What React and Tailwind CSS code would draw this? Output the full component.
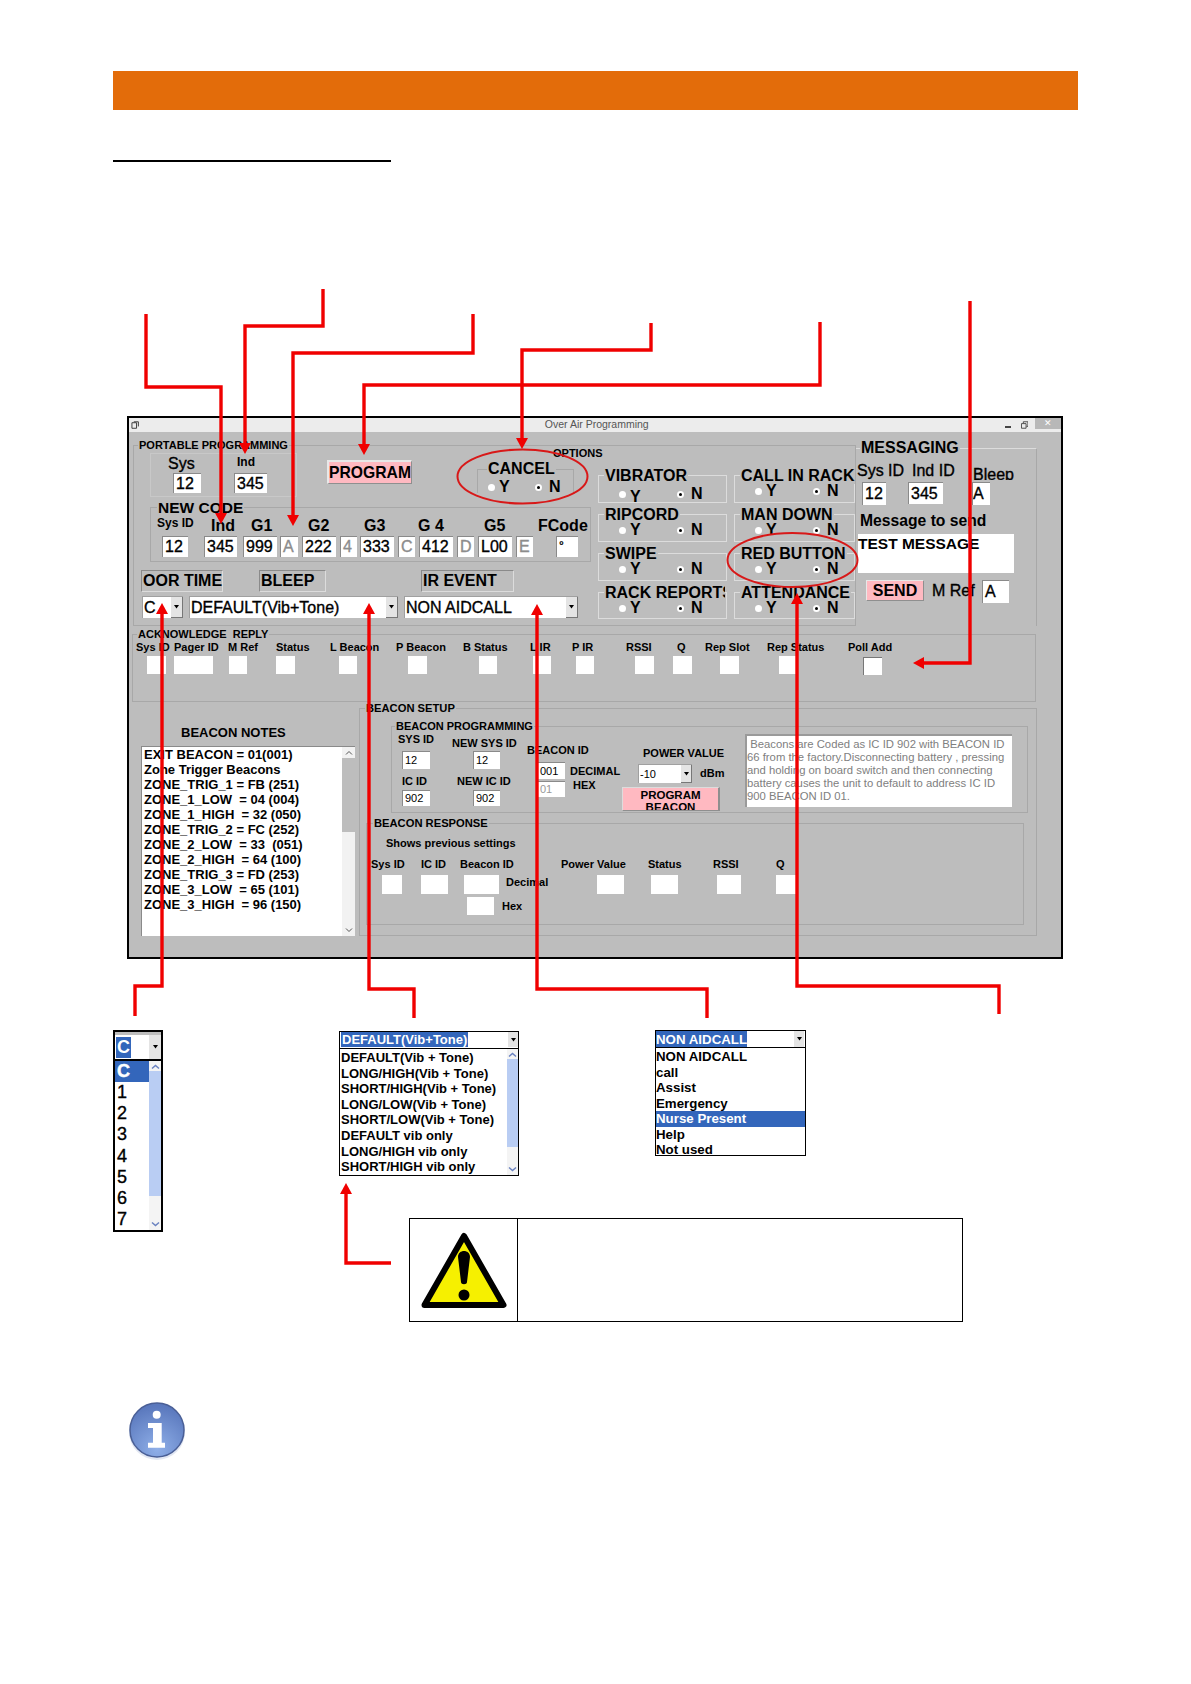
import React from 'react';

// --- SHARED BITS ---

const BG = 'bg-[#bdbdbd]';
const SEMI = 'font-normal [-webkit-text-stroke:0.35px_#000]';

const Legend = ({ className = '', children }) => (
  <span className={`absolute ${BG} whitespace-nowrap px-px leading-none font-bold text-black ${className}`}>{children}</span>
);

const Field = ({ className = '', children }) => (
  <div className={`bg-white border-t border-l border-[#8a8a8a] shrink-0 overflow-hidden flex items-center pl-[2px] whitespace-nowrap ${className}`}>{children}</div>
);

const Lbl = ({ className = '', children }) => (
  <span className={`shrink-0 whitespace-nowrap block ${className}`}>{children}</span>
);

const Tri = () => (
  <svg width="7" height="4" viewBox="0 0 7 4"><path d="M1 0h5L3.500 3.500z" fill="#000" /></svg>
);

const Combo = ({ className = '', children, btn = 'w-[12px]' }) => (
  <div className={`bg-white border-t border-l border-[#a0a0a0] flex shrink-0 overflow-hidden ${className}`}>
    <div className="flex-1 pl-[1px] flex items-center whitespace-nowrap overflow-hidden">{children}</div>
    <div className={`${btn} bg-[#e4e4e4] border-r border-b border-[#777] flex items-center justify-center`}><Tri /></div>
  </div>
);

const Radio = ({ on }) => (
  <span className="w-[7px] h-[7px] rounded-full bg-white flex items-center justify-center shrink-0">
    {on && <span className="w-[3px] h-[3px] rounded-full bg-black" />}
  </span>
);

const YesNo = ({ className = '', yClass = 'w-[47px]' }) => (
  <div className={`flex items-center text-[16px] font-bold leading-[16px] ${className}`}>
    <Radio />
    <span className={`ml-[4px] ${yClass}`}>Y</span>
    <Radio on />
    <span className="ml-[7px]">N</span>
  </div>
);

const Option = ({ title, className = '', yClass = 'w-[47px]', row = 'ml-[20px] mt-[7px]' }) => (
  <div className={`relative border border-[#dcdcdc] ${className}`}>
    <Legend className="-top-[8px] left-[5px] text-[16px] h-[16px] max-w-[121px] overflow-hidden">{title}</Legend>
    <YesNo className={row} yClass={yClass} />
  </div>
);

// --- ARROWS AND RINGS DRAWN OVER THE FORM ---

const Arrow = ({ pts }) => {
  const [tx, ty] = pts[pts.length - 1];
  const [px, py] = pts[pts.length - 2];
  const dx = Math.sign(tx - px);
  const dy = Math.sign(ty - py);
  const head = `${tx},${ty} ${tx - dx * 11 - dy * 6},${ty - dy * 11 - dx * 6} ${tx - dx * 11 + dy * 6},${ty - dy * 11 + dx * 6}`;
  const line = pts.slice(0, -1).map((p) => p.join(',')).join(' ') + ` ${tx - dx * 8},${ty - dy * 8}`;
  return (
    <g>
      <polyline points={line} fill="none" stroke="#f00000" strokeWidth="3.400" strokeLinejoin="miter" />
      <polygon points={head} fill="#f00000" />
    </g>
  );
};

const Overlay = () => (
  <svg className="absolute top-0 left-0 pointer-events-none" width="1191" height="1684" viewBox="0 0 1191 1684">
    <Arrow pts={[[146, 314], [146, 387], [221, 387], [221, 524]]} />
    <Arrow pts={[[323, 289], [323, 326], [245, 326], [245, 454]]} />
    <Arrow pts={[[473, 314], [473, 353], [293, 353], [293, 526]]} />
    <Arrow pts={[[820, 322], [820, 385], [364, 385], [364, 455]]} />
    <Arrow pts={[[651, 323], [651, 350], [522, 350], [522, 449]]} />
    <Arrow pts={[[970, 301], [970, 663], [913, 663]]} />
    <Arrow pts={[[135, 1016], [135, 986], [162, 986], [162, 603]]} />
    <Arrow pts={[[414, 1018], [414, 989], [369, 989], [369, 603]]} />
    <Arrow pts={[[707, 1018], [707, 989], [537, 989], [537, 604]]} />
    <Arrow pts={[[999, 1014], [999, 986], [797, 986], [797, 593]]} />
    <Arrow pts={[[391, 1263], [346, 1263], [346, 1183]]} />
    <ellipse cx="522.500" cy="476.500" rx="65" ry="27" fill="none" stroke="#d81818" strokeWidth="2" />
    <ellipse cx="792.500" cy="560" rx="65" ry="27" fill="none" stroke="#d81818" strokeWidth="2" />
  </svg>
);

// --- WINDOW SECTIONS ---

const TitleBar = () => (
  <div className="h-[14px] bg-[#ececec] flex items-center relative text-[10.500px] text-[#555]">
    <svg className="ml-[2px]" width="9" height="9" viewBox="0 0 9 9"><path d="M1 1.500h5v6h-5zM3 .500h5v5" fill="none" stroke="#333" /></svg>
    <span className="ml-[402px] w-[120px] text-center whitespace-nowrap">Over Air Programming</span>
    <span className="ml-[353px] w-[6px] h-[2px] bg-[#444] mt-[3px]" />
    <svg className="ml-[10px]" width="8" height="8" viewBox="0 0 8 8"><path d="M.500 2.500h5v5h-5zM2.500 2V.500h5v5H6" fill="none" stroke="#444" /></svg>
    <div className="ml-[7px] w-[28px] h-[11px] -mt-[3px] bg-[#b8b8b8] flex items-center justify-center text-white text-[9px]">✕</div>
  </div>
);

const GRAY_FIELD = 'text-[#8c8c8c] [-webkit-text-stroke:0.35px_#8c8c8c]';

const NewCode = () => (
  <div className="relative ml-[16px] mt-[10px] w-[441px] h-[55px] border border-[#a8a8a8]">
    <Legend className="-top-[8px] left-[6px] text-[15.500px] h-[16px]">NEW CODE</Legend>
    <div className="h-[28px] flex items-end pb-[1px] text-[16px] leading-[18px] font-bold">
      <Lbl className="ml-[6px] w-[54px] text-[12px] mb-[3px]">Sys ID</Lbl>
      <Lbl className="w-[40px]">Ind</Lbl>
      <Lbl className="w-[57px]">G1</Lbl>
      <Lbl className="w-[56px]">G2</Lbl>
      <Lbl className="w-[54px]">G3</Lbl>
      <Lbl className="w-[66px]">G 4</Lbl>
      <Lbl className="w-[54px]">G5</Lbl>
      <Lbl>FCode</Lbl>
    </div>
    <div className={`flex h-[21px] text-[16px] ${SEMI}`}>
      <Field className="ml-[11px] w-[26px]">12</Field>
      <Field className="ml-[16px] w-[33px]">345</Field>
      <Field className="ml-[6px] w-[34px]">999</Field>
      <Field className={`ml-[3px] w-[18px] ${GRAY_FIELD}`}>A</Field>
      <Field className="ml-[4px] w-[34px]">222</Field>
      <Field className={`ml-[4px] w-[17px] ${GRAY_FIELD}`}>4</Field>
      <Field className="ml-[3px] w-[34px]">333</Field>
      <Field className={`ml-[4px] w-[17px] ${GRAY_FIELD}`}>C</Field>
      <Field className="ml-[4px] w-[34px]">412</Field>
      <Field className={`ml-[4px] w-[17px] ${GRAY_FIELD}`}>D</Field>
      <Field className="ml-[4px] w-[34px]">L00</Field>
      <Field className={`ml-[4px] w-[17px] ${GRAY_FIELD}`}>E</Field>
      <Field className="ml-[23px] w-[22px] items-start text-[12px]">°</Field>
    </div>
  </div>
);

const Portable = () => (
  <div className="relative ml-[1px] w-[723px] h-[181px] border border-[#a8a8a8] flex shrink-0">
    <Legend className="-top-[6px] left-[4px] text-[11px] h-[12px]">PORTABLE PROGRAMMING</Legend>
    <Legend className="top-[2px] left-[418px] text-[11px]">OPTIONS</Legend>
    <div className="w-[464px] shrink-0">
      <div className="flex ml-[16px] mt-[7px] items-start">
        <div className="relative w-[147px] h-[44px] border border-[#c8c8c8] flex">
          <div className="ml-[22px] w-[28px]">
            <Lbl className={`-ml-[5px] h-[19px] text-[16px] leading-[19px] ${SEMI}`}>Sys</Lbl>
            <Field className={`w-[28px] h-[20px] text-[16px] ${SEMI}`}>12</Field>
          </div>
          <div className="ml-[33px] w-[33px]">
            <Lbl className="ml-[3px] h-[19px] text-[12px] leading-[17px] font-bold">Ind</Lbl>
            <Field className={`w-[33px] h-[20px] text-[16px] ${SEMI}`}>345</Field>
          </div>
        </div>
        <button className="ml-[30px] mt-[7px] w-[85px] h-[24px] bg-[#ffb9c1] border-r border-b border-[#8f8f8f] border-t-2 border-l-2 border-t-[#e8e8e8] border-l-[#e8e8e8] text-[15.700px] font-bold leading-none flex items-center justify-center">PROGRAM</button>
        <div className="relative ml-[65px] mt-[16px] w-[97px] h-[24px] border border-[#a8a8a8] border-b-0">
          <Legend className="-top-[9px] left-[9px] text-[16px] h-[16px]">CANCEL</Legend>
          <YesNo className={`ml-[10px] mt-[9px] ${BG} w-[80px]`} yClass="w-[36px]" />
        </div>
      </div>
      <NewCode />
      <div className="flex ml-[7px] mt-[8px] text-[16px] font-bold leading-none items-start whitespace-nowrap">
        <div className="w-[82px] h-[22px] border-t border-l border-[#8a8a8a] border-r border-r-[#dcdcdc] border-b border-b-[#dcdcdc] flex items-center pl-px">OOR TIME</div>
        <div className="ml-[36px] w-[67px] h-[22px] border-t border-l border-[#8a8a8a] border-r border-r-[#dcdcdc] border-b border-b-[#dcdcdc] flex items-center pl-px">BLEEP</div>
        <div className="ml-[95px] w-[93px] h-[22px] border-t border-l border-[#8a8a8a] border-r border-r-[#dcdcdc] border-b border-b-[#dcdcdc] flex items-center pl-px">IR EVENT</div>
      </div>
      <div className={`flex ml-[8px] mt-[4px] text-[16px] ${SEMI}`}>
        <Combo className="w-[41px] h-[22px]">C</Combo>
        <Combo className="ml-[6px] w-[209px] h-[22px]">DEFAULT(Vib+Tone)</Combo>
        <Combo className="ml-[6px] w-[174px] h-[22px]">NON AIDCALL</Combo>
      </div>
    </div>
    <div className="mt-[29px] grid grid-cols-[129px_121px] grid-rows-[28px_28px_28px_27px] gap-x-[7px] gap-y-[11px]">
      <Option title="VIBRATOR" yClass="w-[47px] mt-[6px]" />
      <Option title="CALL IN RACK" />
      <Option title="RIPCORD" />
      <Option title="MAN DOWN" />
      <Option title="SWIPE" />
      <Option title="RED BUTTON" />
      <Option title="RACK REPORTS" />
      <Option title="ATTENDANCE" />
    </div>
  </div>
);

const Messaging = () => (
  <div className="relative mt-[3px] w-[181px] h-[178px] border-t border-r border-t-[#dcdcdc] border-r-[#a8a8a8] shrink-0">
    <Legend className="-top-[9px] left-[4px] text-[16px] h-[17px]">MESSAGING</Legend>
    <div className={`flex mt-[13px] text-[16px] leading-[18px] ${SEMI}`}>
      <Lbl className="ml-[1px] w-[55px]">Sys ID</Lbl>
      <Lbl className="w-[61px]">Ind ID</Lbl>
      <Lbl className="h-[14px] overflow-hidden mt-[4px]">Bleep</Lbl>
    </div>
    <div className={`flex mt-[2px] text-[16px] ${SEMI}`}>
      <Field className="ml-[6px] w-[24px] h-[23px]">12</Field>
      <Field className="ml-[22px] w-[35px] h-[22px]">345</Field>
      <Field className="ml-[29px] w-[18px] h-[23px] !pl-0">A</Field>
    </div>
    <Lbl className="ml-[4px] mt-[7px] text-[15.700px] leading-[18px] font-bold">Message to send</Lbl>
    <div className="ml-[2px] mt-[4px] w-[156px] h-[39px] bg-white text-[15.500px] font-bold leading-[20px]">TEST MESSAGE</div>
    <div className="flex items-start mt-[7px] text-[16px]">
      <button className="ml-[10px] w-[58px] h-[21px] bg-[#ffb9c1] border-t border-l border-[#e8e8e8] border-r border-b border-r-[#8f8f8f] border-b-[#8f8f8f] font-bold leading-none">SEND</button>
      <Lbl className={`ml-[8px] w-[50px] leading-[22px] ${SEMI}`}>M Ref</Lbl>
      <Field className={`w-[27px] h-[23px] ${SEMI}`}>A</Field>
    </div>
  </div>
);

const ackLabels = [
  ['Sys ID', 'ml-[3px] w-[38px]'], ['Pager ID', 'w-[54px]'], ['M Ref', 'w-[48px]'], ['Status', 'w-[54px]'],
  ['L Beacon', 'w-[66px]'], ['P Beacon', 'w-[67px]'], ['B Status', 'w-[67px]'], ['L IR', 'w-[42px]'],
  ['P IR', 'w-[54px]'], ['RSSI', 'w-[51px]'], ['Q', 'w-[28px]'], ['Rep Slot', 'w-[62px]'],
  ['Rep Status', 'w-[81px]'], ['Poll Add', 'w-[50px]'],
];

const ackBoxes = [
  'ml-[14px] w-[19px]', 'ml-[8px] w-[39px]', 'ml-[16px] w-[18px]', 'ml-[29px] w-[19px]', 'ml-[44px] w-[18px]',
  'ml-[51px] w-[19px]', 'ml-[52px] w-[18px]', 'ml-[36px] w-[18px]', 'ml-[25px] w-[18px]', 'ml-[41px] w-[19px]',
  'ml-[19px] w-[19px]', 'ml-[28px] w-[19px]', 'ml-[40px] w-[18px]', 'ml-[66px] w-[19px] mt-px border-t border-l border-[#777]',
];

const Acknowledge = () => (
  <div className="relative mt-[8px] w-[904px] h-[68px] border border-[#a8a8a8] shrink-0">
    <Legend className="-top-[6px] left-[4px] text-[11px] h-[12px] whitespace-pre">ACKNOWLEDGE  REPLY</Legend>
    <div className="flex pt-[6px] h-[19px] text-[11px] leading-[13px] font-bold">
      {ackLabels.map(([text, cls]) => <Lbl key={text} className={cls}>{text}</Lbl>)}
    </div>
    <div className="flex mt-[2px]">
      {ackBoxes.map((cls) => <div key={cls} className={`h-[18px] bg-white shrink-0 ${cls}`} />)}
    </div>
  </div>
);

const noteLines = [
  'EXIT BEACON = 01(001)', 'Zone Trigger Beacons', 'ZONE_TRIG_1 = FB (251)', 'ZONE_1_LOW  = 04 (004)',
  'ZONE_1_HIGH  = 32 (050)', 'ZONE_TRIG_2 = FC (252)', 'ZONE_2_LOW  = 33  (051)', 'ZONE_2_HIGH  = 64 (100)',
  'ZONE_TRIG_3 = FD (253)', 'ZONE_3_LOW  = 65 (101)', 'ZONE_3_HIGH  = 96 (150)',
];

const BeaconNotes = () => (
  <div className="ml-[9px] w-[214px] shrink-0">
    <Lbl className="ml-[40px] mt-[17px] h-[16px] text-[13px] leading-[16px] font-bold">BEACON NOTES</Lbl>
    <div className="mt-[5px] h-[190px] bg-white border-t border-l border-[#8a8a8a] flex">
      <div className="flex-1 pl-[2px] text-[13px] leading-[15px] font-bold whitespace-pre">
        {noteLines.map((l) => <div key={l}>{l}</div>)}
      </div>
      <div className="w-[13px] flex flex-col items-center bg-[#f2f2f2] text-[#444]">
        <svg className="mt-[2px]" width="8" height="8" viewBox="0 0 8 8"><path d="M1 5.500l3-3 3 3" fill="none" stroke="#555" /></svg>
        <div className="mt-[1px] w-full h-[74px] bg-[#bdbdbd]" />
        <div className="flex-1" />
        <svg className="mb-[2px]" width="8" height="8" viewBox="0 0 8 8"><path d="M1 2.500l3 3 3-3" fill="none" stroke="#555" /></svg>
      </div>
    </div>
  </div>
);

const BeaconProgramming = () => (
  <div className="relative ml-[31px] mt-[17px] w-[637px] h-[87px] border border-[#a8a8a8] flex text-[11px] leading-[13px] font-bold">
    <Legend className="-top-[6px] left-[3px] text-[11px] h-[12px]">BEACON PROGRAMMING</Legend>
    <div className="w-[54px] shrink-0 pt-[6px]">
      <Lbl className="ml-[6px] h-[13px]">SYS ID</Lbl>
      <Field className="ml-[10px] mt-[5px] w-[28px] h-[18px] font-normal text-[11px]">12</Field>
      <Lbl className="ml-[10px] mt-[6px] h-[13px]">IC ID</Lbl>
      <Field className="ml-[10px] mt-[2px] w-[28px] h-[16px] font-normal text-[11px]">902</Field>
    </div>
    <div className="w-[81px] shrink-0 pt-[10px]">
      <Lbl className="ml-[6px] h-[13px]">NEW SYS ID</Lbl>
      <Field className="ml-[27px] mt-[1px] w-[27px] h-[18px] font-normal">12</Field>
      <Lbl className="ml-[11px] mt-[6px] h-[13px]">NEW IC ID</Lbl>
      <Field className="ml-[27px] mt-[2px] w-[27px] h-[16px] font-normal">902</Field>
    </div>
    <div className="w-[95px] shrink-0 pt-[17px]">
      <Lbl className="h-[13px]">BEACON ID</Lbl>
      <div className="flex mt-[5px]">
        <div className="ml-[10px] w-[28px] shrink-0">
          <Field className="w-[28px] h-[17px] font-normal">001</Field>
          <Field className="mt-[2px] w-[28px] h-[16px] font-normal text-[#999]">01</Field>
        </div>
        <div className="ml-[5px] pt-[3px]">
          <Lbl className="h-[13px]">DECIMAL</Lbl>
          <Lbl className="ml-[3px] mt-[1px] h-[13px]">HEX</Lbl>
        </div>
      </div>
    </div>
    <div className="w-[98px] shrink-0 pt-[20px]">
      <Lbl className="ml-[21px] h-[13px]">POWER VALUE</Lbl>
      <div className="flex items-center mt-[4px] h-[19px]">
        <Combo className="ml-[16px] w-[54px] h-[19px] font-normal" btn="w-[11px]">-10</Combo>
        <Lbl className="ml-[8px]">dBm</Lbl>
      </div>
      <div className="mt-[4px] w-[98px] h-[24px] bg-[#ffb9c1] border-t border-l border-[#dcdcdc] border-r-2 border-b border-r-[#8f8f8f] border-b-[#8f8f8f] overflow-hidden text-center text-[11.500px] leading-[12px] pt-[1px]">PROGRAM<br />BEACON</div>
    </div>
    <div className="ml-[25px] mt-[7px] w-[267px] h-[73px] bg-white border-t-2 border-l-2 border-[#9a9a9a] text-[11.300px] leading-[13px] font-normal text-[#808080] pt-[2px] whitespace-pre overflow-hidden">
      {' Beacons are Coded as IC ID 902 with BEACON ID\n66 from the factory.Disconnecting battery , pressing\nand holding on board switch and then connecting\nbattery causes the unit to default to address IC ID\n900 BEACON ID 01.'}
    </div>
  </div>
);

const BeaconResponse = () => (
  <div className="relative ml-[6px] mt-[10px] w-[658px] h-[102px] border border-[#a8a8a8] text-[11px] leading-[13px] font-bold">
    <Legend className="-top-[6px] left-[6px] text-[11.200px] h-[12px]">BEACON RESPONSE</Legend>
    <Lbl className="ml-[19px] pt-[13px] h-[26px]">Shows previous settings</Lbl>
    <div className="flex mt-[8px] h-[13px]">
      <Lbl className="ml-[4px] w-[50px]">Sys ID</Lbl>
      <Lbl className="w-[39px]">IC ID</Lbl>
      <Lbl className="w-[101px]">Beacon ID</Lbl>
      <Lbl className="w-[87px]">Power Value</Lbl>
      <Lbl className="w-[65px]">Status</Lbl>
      <Lbl className="w-[63px]">RSSI</Lbl>
      <Lbl>Q</Lbl>
    </div>
    <div className="flex items-start mt-[4px]">
      <div className="ml-[15px] w-[20px] h-[19px] bg-white shrink-0" />
      <div className="ml-[19px] w-[27px] h-[19px] bg-white shrink-0" />
      <div className="ml-[16px] w-[35px] h-[19px] bg-white shrink-0" />
      <Lbl className="ml-[7px] w-[42px] mt-px">Decimal</Lbl>
      <div className="ml-[49px] w-[27px] h-[19px] bg-white shrink-0" />
      <div className="ml-[27px] w-[27px] h-[19px] bg-white shrink-0" />
      <div className="ml-[39px] w-[24px] h-[19px] bg-white shrink-0" />
      <div className="ml-[35px] w-[21px] h-[19px] bg-white shrink-0" />
    </div>
    <div className="flex items-center mt-[3px]">
      <div className="ml-[100px] w-[27px] h-[18px] bg-white shrink-0" />
      <Lbl className="ml-[8px]">Hex</Lbl>
    </div>
  </div>
);

const BeaconSetup = () => (
  <div className="relative ml-[4px] w-[678px] h-[228px] border border-[#a8a8a8] shrink-0">
    <Legend className="-top-[6px] left-[5px] text-[11.200px] h-[12px]">BEACON SETUP</Legend>
    <BeaconProgramming />
    <BeaconResponse />
  </div>
);

const FormWindow = () => (
  <div className={`ml-[14px] mt-[254px] w-[936px] h-[543px] border-2 border-black ${BG} overflow-hidden`}>
    <TitleBar />
    <div className="pl-[3px]">
      <div className="flex mt-[13px]">
        <Portable />
        <Messaging />
      </div>
      <Acknowledge />
      <div className="flex mt-[6px]">
        <BeaconNotes />
        <BeaconSetup />
      </div>
    </div>
  </div>
);

// --- DROPDOWN SAMPLES UNDER THE WINDOW ---

const ListScroll = ({ className = '', thumb = 'h-[70%]' }) => (
  <div className={`flex flex-col items-center bg-[#f4f4f4] shrink-0 ${className}`}>
    <svg className="mt-[2px]" width="9" height="8" viewBox="0 0 9 8"><path d="M1 5.500l3.500-3 3.500 3" fill="none" stroke="#6a82c0" strokeWidth="1.500" /></svg>
    <div className={`w-full bg-[#b9cdf3] ${thumb}`} />
    <div className="flex-1" />
    <svg className="mb-[2px]" width="9" height="8" viewBox="0 0 9 8"><path d="M1 2.500l3.500 3 3.500-3" fill="none" stroke="#6a82c0" strokeWidth="1.500" /></svg>
  </div>
);

const SmallCombo = () => (
  <div className="w-[50px] h-[202px] border-2 border-black bg-white flex flex-col shrink-0">
    <div className="h-[3px] bg-[#bdbdbd]" />
    <div className="h-[26px] flex border-b-2 border-black">
      <span className="ml-px mt-[2px] h-[21px] w-[15px] bg-[#3366bb] text-white text-[18px] font-bold leading-[21px] text-center">C</span>
      <div className="flex-1" />
      <div className="w-[12px] bg-[#e4e4e4] flex items-center justify-center"><Tri /></div>
    </div>
    <div className="flex flex-1 overflow-hidden">
      <div className={`flex-1 text-[18px] leading-[21.200px] ${SEMI}`}>
        <div className="bg-[#3366bb] text-white font-bold pl-[2px] h-[21px] [-webkit-text-stroke:0.5px_#fff]">C</div>
        {['1', '2', '3', '4', '5', '6', '7'].map((n) => <div key={n} className="pl-[2px]">{n}</div>)}
      </div>
      <ListScroll className="w-[12px]" thumb="h-[74%]" />
    </div>
  </div>
);

const defaultItems = [
  'DEFAULT(Vib + Tone)', 'LONG/HIGH(Vib + Tone)', 'SHORT/HIGH(Vib + Tone)', 'LONG/LOW(Vib + Tone)',
  'SHORT/LOW(Vib + Tone)', 'DEFAULT vib only', 'LONG/HIGH vib only', 'SHORT/HIGH vib only',
];

const DefaultCombo = () => (
  <div className="mt-px w-[180px] h-[145px] border-[1.500px] border-black bg-white flex flex-col shrink-0">
    <div className="h-[17px] flex border-b border-black text-[13px] font-bold leading-[15px]">
      <span className="ml-px h-[15px] bg-[#3366bb] text-white px-px whitespace-nowrap">DEFAULT(Vib+Tone)</span>
      <div className="flex-1" />
      <div className="w-[10px] h-[15px] bg-[#e4e4e4] flex items-center justify-center"><Tri /></div>
    </div>
    <div className="flex flex-1 overflow-hidden">
      <div className="flex-1 pl-px pt-[1px] text-[13px] leading-[15.600px] font-bold whitespace-nowrap">
        {defaultItems.map((t) => <div key={t}>{t}</div>)}
      </div>
      <ListScroll className="w-[11px]" thumb="h-[70%]" />
    </div>
  </div>
);

const AidCombo = () => (
  <div className="ml-[136px] w-[151px] h-[126px] border-[1.500px] border-black bg-white flex flex-col shrink-0">
    <div className="h-[19px] flex border-b border-black text-[13.300px] font-bold leading-[17px]">
      <span className="h-[16px] bg-[#3366bb] text-white whitespace-nowrap">NON AIDCALL</span>
      <div className="flex-1" />
      <div className="mr-px w-[10px] h-[16px] bg-[#e4e4e4] flex items-center justify-center"><Tri /></div>
    </div>
    <div className="text-[13.300px] leading-[15.500px] font-bold pt-[1px] whitespace-nowrap">
      <div>NON AIDCALL</div>
      <div>call</div>
      <div>Assist</div>
      <div>Emergency</div>
      <div className="bg-[#3366bb] text-white">Nurse Present</div>
      <div>Help</div>
      <div>Not used</div>
    </div>
  </div>
);

const WarningBox = () => (
  <div className="ml-[70px] mt-[42px] w-[554px] h-[104px] border border-black flex">
    <div className="w-[108px] border-r border-black flex items-center justify-center">
      <svg width="90" height="80" viewBox="0 0 90 80">
        <path d="M45 6 L84.500 75 H5.500 Z" fill="#f6f000" stroke="#000" strokeWidth="6" strokeLinejoin="round" />
        <path d="M39 27 C39 19 51 19 51 27 L48 52 C48 55 42 55 42 52 Z" fill="#000" />
        <circle cx="45" cy="65" r="5.500" fill="#000" />
      </svg>
    </div>
  </div>
);

const InfoIcon = () => (
  <svg className="ml-[14px] mt-[168px]" width="60" height="62" viewBox="0 0 60 62">
    <defs>
      <radialGradient id="infoFill" cx="50%" cy="85%" r="80%">
        <stop offset="0%" stopColor="#8fafe8" />
        <stop offset="100%" stopColor="#5a78bd" />
      </radialGradient>
    </defs>
    <circle cx="30" cy="32" r="28" fill="#c6d0e6" opacity="0.5" />
    <circle cx="30" cy="30" r="27" fill="url(#infoFill)" stroke="#4a5f96" strokeWidth="1.500" />
    <circle cx="29.700" cy="14.700" r="4" fill="#fff" />
    <path d="M21 23 H34.700 V42.700 H38 V47.700 H21 V42.700 H26 V28 H21 Z" fill="#fff" />
  </svg>
);

const App = () => (
  <div className="relative w-[1191px] h-[1684px] bg-white overflow-hidden pt-[71px] pl-[113px] font-['Liberation_Sans',Arial,sans-serif] text-black">
    <div className="w-[965px] h-[39px] bg-[#e36c0a]" />
    <div className="mt-[50px] w-[278px] h-[2px] bg-black" />
    <FormWindow />
    <div className="mt-[71px] flex items-start">
      <div className="w-[50px] shrink-0">
        <SmallCombo />
        <InfoIcon />
      </div>
      <div className="ml-[176px]">
        <div className="flex items-start h-[146px]">
          <DefaultCombo />
          <AidCombo />
        </div>
        <WarningBox />
      </div>
    </div>
    <Overlay />
  </div>
);

export default App;
